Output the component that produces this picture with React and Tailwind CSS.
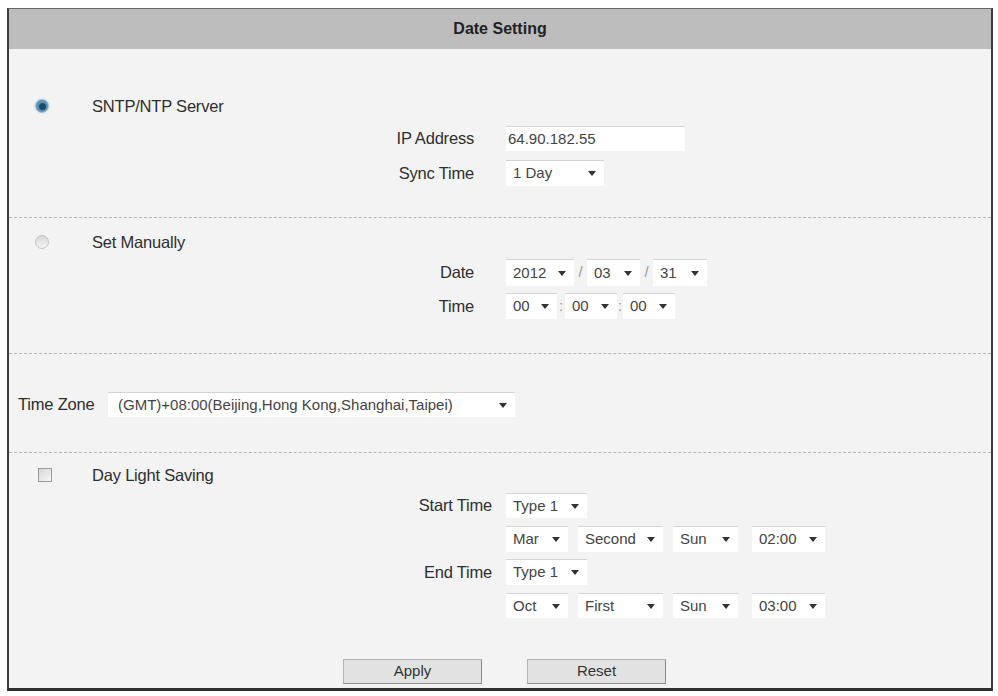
import React from "react";

const Caret = () => (
  <svg width="8" height="5" viewBox="0 0 8 5" className="shrink-0">
    <path d="M0 0h8L4 5z" fill="#333" />
  </svg>
);

function Select({ value, w }) {
  return (
    <div className={`flex h-full items-center justify-between border-t border-[#d4d4d4] bg-white pl-[7px] pr-[8px] text-[15px] text-[#444] ${w}`}>
      <span className="whitespace-nowrap">{value}</span>
      <Caret />
    </div>
  );
}

function Label({ children, w = "w-[465px]", gap = "mr-[32px]" }) {
  return <div className={`${w} ${gap} shrink-0 text-right text-[16.5px] tracking-[-0.2px] text-[#2e2e2e]`}>{children}</div>;
}

const Sep = ({ ch, w }) => (
  <div className={`flex h-full items-center justify-center text-[15px] text-[#999] ${w}`}>{ch}</div>
);

function Radio({ checked }) {
  if (checked) {
    return (
      <div className="grid h-[14px] w-[14px] place-items-center rounded-full border border-[#a8c3d6] bg-[#5d93b6] shadow-[0_0_3px_#c9dbe8]">
        <div className="h-[7px] w-[7px] rounded-full bg-[#1c4a6c]" />
      </div>
    );
  }
  return <div className="h-[14px] w-[14px] rounded-full border border-[#c4c4c4] bg-gradient-to-b from-[#d8d8d8] to-[#f4f4f4]" />;
}

function Button({ children }) {
  return (
    <button className="h-full w-[139px] border border-[#8e8e8e] border-t-[#b4b4b4] border-l-[#b4b4b4] bg-[#e2e2e2] text-[15px] text-[#333]">
      {children}
    </button>
  );
}

const dashed = "border-b border-dashed border-[#b5b5b5]";

export default function App() {
  return (
    <div className="h-[696px] w-[998px] bg-white pt-[8px] pl-[7px] font-['Liberation_Sans',Arial,sans-serif]">
      <div className="w-[986px] border-x-2 border-t border-b-[3px] border-x-[#3c3c3c] border-t-[#666] border-b-[#2e2e2e] bg-[#f3f3f3]">
        <div className="flex h-[40px] items-center justify-center bg-[#bdbdbd] text-[16px] font-bold text-[#222]">
          Date Setting
        </div>

        {/* SNTP */}
        <div className={`h-[169px] pt-[47px] ${dashed}`}>
          <div className="flex h-[20px] items-center pl-[26px]">
            <Radio checked />
            <span className="ml-[43px] text-[16.5px] tracking-[-0.2px] text-[#2e2e2e]">SNTP/NTP Server</span>
          </div>
          <div className="mt-[10px] flex h-[25px] items-center">
            <Label>IP Address</Label>
            <div className="flex h-full w-[179px] items-center border-t border-[#d4d4d4] bg-white pl-[2px] text-[15px] text-[#444]">
              64.90.182.55
            </div>
          </div>
          <div className="mt-[9px] flex h-[26px] items-center">
            <Label>Sync Time</Label>
            <Select value="1 Day" w="w-[98px]" />
          </div>
        </div>

        {/* Manual */}
        <div className={`h-[136px] pt-[14px] ${dashed}`}>
          <div className="flex h-[20px] items-center pl-[26px]">
            <Radio />
            <span className="ml-[43px] text-[16.5px] tracking-[-0.2px] text-[#2e2e2e]">Set Manually</span>
          </div>
          <div className="mt-[7px] flex h-[27px] items-center">
            <Label>Date</Label>
            <Select value="2012" w="w-[68px]" />
            <Sep ch="/" w="w-[13px]" />
            <Select value="03" w="w-[53px]" />
            <Sep ch="/" w="w-[13px]" />
            <Select value="31" w="w-[54px]" />
          </div>
          <div className="mt-[7px] flex h-[26px] items-center">
            <Label>Time</Label>
            <Select value="00" w="w-[51px]" />
            <Sep ch=":" w="w-[8px]" />
            <Select value="00" w="w-[52px]" />
            <Sep ch=":" w="w-[6px]" />
            <Select value="00" w="w-[52px]" />
          </div>
        </div>

        {/* Time zone */}
        <div className={`h-[99px] pt-[38px] ${dashed}`}>
          <div className="flex h-[25px] items-center pl-[9px]">
            <span className="w-[90px] text-[16.5px] tracking-[-0.2px] text-[#2e2e2e]">Time Zone</span>
            <Select value="(GMT)+08:00(Beijing,Hong Kong,Shanghai,Taipei)" w="w-[407px] pl-[10px]" />
          </div>
        </div>

        {/* DST */}
        <div className="h-[235px] pt-[12px]">
          <div className="flex h-[20px] items-center pl-[29px]">
            <div className="h-[14px] w-[14px] border border-[#9a9a9a] bg-gradient-to-br from-[#d6d6d6] to-[#f6f6f6]" />
            <span className="ml-[40px] text-[16.5px] tracking-[-0.2px] text-[#2e2e2e]">Day Light Saving</span>
          </div>
          <div className="mt-[8px] flex h-[25px] items-center">
            <Label w="w-[483px]" gap="mr-[14px]">Start Time</Label>
            <Select value="Type 1" w="w-[81px]" />
          </div>
          <div className="mt-[8px] flex h-[26px] items-center gap-[10px] pl-[497px]">
            <Select value="Mar" w="w-[62px]" />
            <Select value="Second" w="w-[85px]" />
            <Select value="Sun" w="w-[65px]" />
            <div className="ml-[4px] h-full">
              <Select value="02:00" w="w-[73px]" />
            </div>
          </div>
          <div className="mt-[7px] flex h-[26px] items-center">
            <Label w="w-[483px]" gap="mr-[14px]">End Time</Label>
            <Select value="Type 1" w="w-[81px]" />
          </div>
          <div className="mt-[8px] flex h-[25px] items-center gap-[10px] pl-[497px]">
            <Select value="Oct" w="w-[62px]" />
            <Select value="First" w="w-[85px]" />
            <Select value="Sun" w="w-[65px]" />
            <div className="ml-[4px] h-full">
              <Select value="03:00" w="w-[73px]" />
            </div>
          </div>
          <div className="mt-[41px] flex h-[25px] items-center gap-[45px] pl-[334px]">
            <Button>Apply</Button>
            <Button>Reset</Button>
          </div>
        </div>
      </div>
    </div>
  );
}
